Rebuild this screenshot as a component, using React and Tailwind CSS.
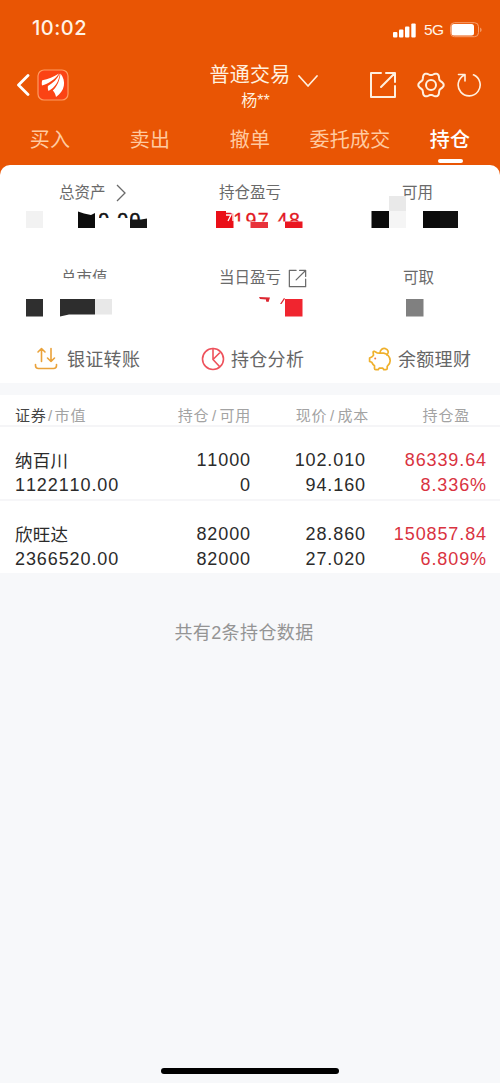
import clsx from 'clsx';

const tabs = ['买入', '卖出', '撤单', '委托成交', '持仓'];

const holdings = [
    { name: '纳百川', marketValue: '1122110.00', amount: '11000', available: '0', price: '102.010', cost: '94.160', profit: '86339.64', rate: '8.336%' },
    { name: '欣旺达', marketValue: '2366520.00', amount: '82000', available: '82000', price: '28.860', cost: '27.020', profit: '150857.84', rate: '6.809%' },
];

// six-lobed outline of the settings icon
const gearPoints = Array.from({ length: 72 }, (_, i) => {
    const a = (i * Math.PI) / 36;
    const r = 11.3 + 1.4 * Math.cos(6 * a);
    return `${(14 + r * Math.cos(a)).toFixed(2)},${(14 + r * Math.sin(a)).toFixed(2)}`;
}).join(' ');

function StatusBar() {
    return (
        <div className="flex h-14 items-center justify-between pl-8 pr-[18px] text-[#fff3e6]">
            <span className="font-[Inter] text-[20px] font-medium tracking-[0.5px]">10:02</span>
            <div className="flex items-center pt-1">
                <svg width="24" height="15" viewBox="0 0 24 15" fill="white">
                    <rect x="0" y="9" width="4.4" height="5.5" rx="1" />
                    <rect x="6" y="6.5" width="4.4" height="8" rx="1" />
                    <rect x="12" y="3.5" width="4.4" height="11" rx="1" />
                    <rect x="18.3" y="0.5" width="4.4" height="14" rx="1" />
                </svg>
                <span className="ml-[7px] w-[20px] font-['Liberation_Sans'] text-[15.5px] leading-4 tracking-[-0.5px]">5G</span>
                <svg className="ml-[6px]" width="32" height="16" viewBox="0 0 32 16">
                    <rect x="0.5" y="0.7" width="28" height="14" rx="4" fill="none" stroke="#f8a070" />
                    <rect x="1.5" y="2" width="22.5" height="11.5" rx="2.5" fill="white" />
                    <path d="M30.3 5.5c1.6.8 1.6 4 0 4.8z" fill="#f8b48a" />
                </svg>
            </div>
        </div>
    );
}

function ShareBox({ size, stroke }) {
    return (
        <svg width={size} height={size} viewBox="0 0 28 28" fill="none" stroke="currentColor" strokeWidth={stroke} strokeLinecap="round" strokeLinejoin="round">
            <path d="M12 2H2v24h24V15M12 16 25.5 2.5M17 2h9v9" />
        </svg>
    );
}

function NavBar() {
    return (
        <div className="flex h-[58px] items-center pl-4 pr-[18px] text-[#fff0df]">
            <svg width="14" height="22" viewBox="0 0 14 22" fill="none" stroke="white" strokeWidth="2.8" strokeLinecap="round" strokeLinejoin="round">
                <path d="M12 1.5 2.5 11 12 20.5" />
            </svg>
            <svg className="ml-[7px]" width="32" height="32" viewBox="0 0 32 32">
                <rect x="1" y="1" width="30" height="30" rx="6" fill="#fb4314" stroke="#ff9b62" strokeWidth="1.2" />
                <path d="M5 16.5C4.6 14.5 4.8 12.5 5.3 11.2 11 10 17 8 22 4.5 18 10.5 11.5 14.5 5 16.5Z" fill="white" />
                <path d="M11.5 22C10.800 20.5 10.7 19 10.900 17 16 14 20.5 10 22.800 4.5 22 12.5 18 18.5 11.5 22Z" fill="white" />
                <path d="M19 28C18.5 25 17.3 23.2 15.8 21.5 20 17.5 22.8 11.5 23.5 4.5 29.5 12 28 22 19 28Z" fill="white" />
            </svg>
            <div className="ml-[140px] flex w-[82px] flex-col items-center pt-[6px] whitespace-nowrap">
                <span className="text-[20px] leading-[26px] tracking-[0.2px]">普通交易</span>
                <span className="ml-[11px] text-[16px] leading-[26px]">杨**</span>
            </div>
            <svg className="mb-[7px] ml-[7px]" width="20" height="13" viewBox="0 0 20 13" fill="none" stroke="currentColor" strokeWidth="1.7" strokeLinecap="round" strokeLinejoin="round">
                <path d="M1 1l9 10 9-10" />
            </svg>
            <div className="ml-auto flex items-center">
                <ShareBox size={28} stroke={2} />
                <svg className="ml-5" width="28" height="28" viewBox="0 0 28 28" fill="none" stroke="currentColor" strokeWidth="2">
                    <polygon points={gearPoints} strokeLinejoin="round" />
                    <circle cx="14" cy="14" r="5" />
                </svg>
                <svg className="ml-[11px]" width="26" height="26" viewBox="0 0 26 26" fill="none" stroke="currentColor" strokeWidth="1.6" strokeLinecap="round" strokeLinejoin="round">
                    <path d="M17.5 2.8A11 11 0 1 1 8 3.2M2.500 2.5H9V9" />
                </svg>
            </div>
        </div>
    );
}

function Tabs() {
    return (
        <nav className="grid h-[51px] grid-cols-5">
            {tabs.map((tab) => {
                const active = tab === '持仓';
                return (
                    <div key={tab} className="flex flex-col items-center">
                        <span className={clsx('pt-2 text-[20px] leading-[36px] tracking-[0.3px] whitespace-nowrap', active ? 'font-medium text-white' : 'text-[#ffcaa0]')}>{tab}</span>
                        {active && <span className="mt-px h-1 w-[25px] rounded-full bg-white" />}
                    </div>
                );
            })}
        </nav>
    );
}

// Blocks that hide the account amounts
function PrivacyMask() {
    return (
        <svg className="absolute inset-0" width="500" height="170" viewBox="0 165 500 170">
            <rect x="26" y="211" width="17" height="17" fill="#f2f2f2" />
            <rect x="78" y="208" width="21" height="22" fill="white" />
            <path d="M78 211.5l6 2 7 1.5 4-2V228H78z" fill="#0c0c0c" />
            <rect x="95" y="218" width="35" height="12" fill="white" />
            <rect x="130" y="222" width="20" height="8" fill="white" />
            <path d="M130 219.5h11l6-1V228h-17z" fill="#161616" />

            <rect x="233" y="221.5" width="70" height="9" fill="white" />
            <path d="M216 211h10v2.5h7.500V228H216z" fill="#ea0f18" />
            <path d="M226 215h5l-3 6M233 213v8" fill="none" stroke="white" strokeWidth="1.3" />
            <rect x="250.5" y="222" width="17.5" height="6" fill="#e8333b" />
            <rect x="285" y="221.5" width="17.5" height="6.5" fill="#ea1721" />

            <rect x="371.5" y="211" width="17.5" height="17" fill="#0b0b0b" />
            <rect x="389" y="196" width="17" height="15" fill="#e9e9e9" />
            <rect x="389" y="211" width="17" height="17" fill="#f5f5f5" />
            <rect x="423" y="211" width="17" height="17" fill="#0a0a0a" />
            <rect x="440" y="211" width="18" height="17" fill="#111" />

            <rect x="58" y="278.7" width="52" height="9" fill="white" />
            <rect x="26" y="299" width="17" height="17.5" fill="#2f2f2f" />
            <path d="M60 299h35v15.5H69l-9 2z" fill="#2d2d2d" />
            <rect x="95" y="299" width="17" height="15.5" fill="#e8e8e8" />

            <path d="M259 297l11 .5-1.5 4.5-2.5-.5v-2l-6-.5z" fill="#dd2832" />
            <path d="M284 298l1 .8-3.5 5.2h-1.5z" fill="#dd2832" />
            <rect x="285" y="299" width="17.5" height="17.5" fill="#f0252f" />
            <rect x="406" y="299" width="17.5" height="17.5" fill="#808080" />
        </svg>
    );
}

function Summary() {
    return (
        <div className="relative grid h-[170px] grid-cols-[167px_166px_167px] grid-rows-[85px_85px] pt-4 text-[15.5px] text-[#6a6a6a]">
            <div>
                <div className="flex h-6 items-center pl-[59px]">
                    总资产
                    <svg className="ml-[10px]" width="11" height="18" viewBox="0 0 11 18" fill="none" stroke="currentColor" strokeWidth="1.3">
                        <path d="M1 1l8 8-8 8" />
                    </svg>
                </div>
                <p className="pl-[86px] pt-[3px] font-['Liberation_Sans'] text-[19.5px] leading-6 tracking-[1.4px] text-[#111] [-webkit-text-stroke:0.5px_#111]">40.00</p>
            </div>
            <div>
                <p className="pl-[52px] leading-6">持仓盈亏</p>
                <p className="pl-[54px] pt-[3px] font-['Liberation_Sans'] text-[19.5px] leading-6 tracking-[1.4px] text-[#e21822] [-webkit-text-stroke:0.3px_#e21822]">7197.48</p>
            </div>
            <p className="pl-[69px] leading-6">可用</p>
            <p className="pl-[61px] leading-6">总市值</p>
            <div className="flex h-6 items-center gap-[7px] pl-[52px]">
                当日盈亏
                <ShareBox size={19} stroke={1.8} />
            </div>
            <p className="pl-[70px] leading-6">可取</p>
            <PrivacyMask />
        </div>
    );
}

function TransferIcon() {
    return (
        <svg width="24" height="24" viewBox="0 0 24 24" fill="none" stroke="#eaa23a" strokeWidth="1.6" strokeLinecap="round" strokeLinejoin="round">
            <path d="M7.5 14.5V1.5M4 5l3.5-3.5L11 5M17 1.5V14.5M13.5 11l3.5 3.5 3.5-3.5M1.5 17.5v1a3 3 0 0 0 3 3h15a3 3 0 0 0 3-3v-1" />
        </svg>
    );
}

function AnalysisIcon() {
    return (
        <svg width="24" height="24" viewBox="0 0 24 24" fill="none" stroke="#ee525c" strokeWidth="1.6" strokeLinecap="round" strokeLinejoin="round">
            <circle cx="12" cy="12" r="10.5" />
            <path d="M12 1.5V12.5l6.5 7M12 12.5l6.5-6.5" />
        </svg>
    );
}

function PiggyIcon() {
    return (
        <svg width="24" height="24" viewBox="0 0 24 24" fill="none" stroke="#efb02c" strokeWidth="1.7" strokeLinecap="round" strokeLinejoin="round">
            <path d="M12 6.2 9 5.8 6.2 4.3C5.2 4 5 5 5.2 6l.3 2.2C4.5 9.5 4 10 3.2 10.3L1.6 11v3.5l2.2.8c.8 1.8 1.6 2.7 2.7 3.5v2.7c0 .8.5 1.2 1.3 1.2h2.4l1-1.6h3.6l1 1.6h2c.9 0 1.4-.5 1.4-1.3v-2c1.8-1.5 3-3.3 3-5.7 0-3.8-2.8-7-6.5-7.5z" />
            <path d="M12 6.2C12 2.5 15 1 17.3 1.6c3 .8 4 4.4 1.6 6.3" />
            <circle cx="7.2" cy="11.5" r="1" fill="#f07a4a" stroke="none" />
        </svg>
    );
}

function QuickActions() {
    const actions = [
        { label: '银证转账', icon: <TransferIcon /> },
        { label: '持仓分析', icon: <AnalysisIcon /> },
        { label: '余额理财', icon: <PiggyIcon /> },
    ];
    return (
        <div className="grid h-12 grid-cols-[167px_167px_166px] text-[18px] text-[#666]">
            {actions.map(({ label, icon }, i) => (
                <div key={label} className={clsx('flex items-center pl-[34px] whitespace-nowrap tracking-[0.3px]', i === 0 ? 'gap-[9px]' : 'gap-[6px]')}>
                    {icon}
                    <span className="pt-[2px]">{label}</span>
                </div>
            ))}
        </div>
    );
}

function HoldingsTable() {
    return (
        <section className="mt-3 bg-white">
            <div className="grid h-8 grid-cols-[135px_101px_118px_101px] items-center border-b-2 border-[#f5f5f7] pl-[15px] pt-[11px] text-right text-[15px] leading-5 tracking-[0.8px] text-[#a3a3a3]">
                <span className="text-left"><span className="text-[#444]">证券</span><span className="px-[1.5px]">/</span>市值</span>
                <span>持仓<span className="px-[2.5px]">/</span>可用</span>
                <span>现价<span className="px-[2.5px]">/</span>成本</span>
                <span>持仓盈</span>
            </div>
            {holdings.map((h, i) => (
                <div
                    key={h.name}
                    className={clsx('grid grid-cols-[136px_100px_115px_121px] pl-[15px] pt-[21px] text-right text-[18px] leading-[25px] tracking-[0.9px] text-[#2b2b2b] [font-kerning:none]', i === 0 ? 'h-[74px] border-b-2 border-[#f6f6f8]' : 'h-[72px]')}
                >
                    <div className="text-left">
                        <p className="-mt-px mb-px font-['Noto_Sans_CJK_SC'] text-[17.5px] tracking-[0.2px]">{h.name}</p>
                        <p>{h.marketValue}</p>
                    </div>
                    <div>
                        <p>{h.amount}</p>
                        <p>{h.available}</p>
                    </div>
                    <div>
                        <p>{h.price}</p>
                        <p>{h.cost}</p>
                    </div>
                    <div className="text-[#d9333f]">
                        <p>{h.profit}</p>
                        <p>{h.rate}</p>
                    </div>
                </div>
            ))}
        </section>
    );
}

export default function App() {
    return (
        <div className="flex h-[1083px] w-[500px] flex-col overflow-hidden bg-[#f7f8fa] font-['Liberation_Sans','Noto_Sans_CJK_SC',sans-serif]">
            <div className="bg-[#e95504]">
                <StatusBar />
                <NavBar />
                <Tabs />
                <div className="rounded-t-[10px] bg-white">
                    <Summary />
                    <QuickActions />
                </div>
            </div>
            <HoldingsTable />
            <p className="mt-[48px] pr-3 text-center text-[18px] leading-6 tracking-[0.4px] text-[#949494]">共有2条持仓数据</p>
            <div className="mx-auto mb-[9px] mt-auto h-[6px] w-[178px] rounded-full bg-black" />
        </div>
    );
}
